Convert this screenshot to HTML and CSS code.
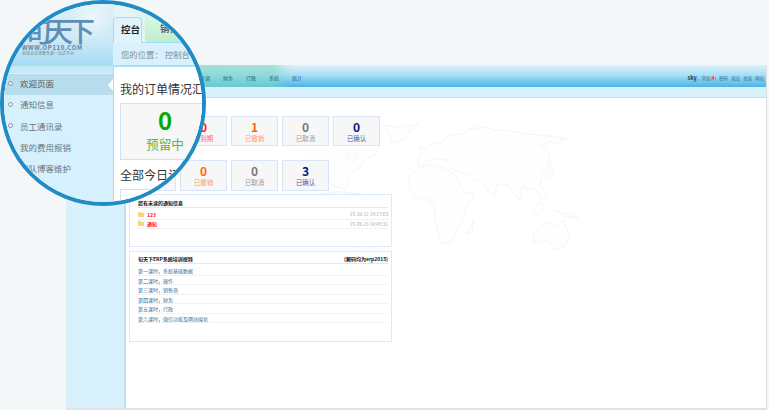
FILE: index.html
```html
<!DOCTYPE html>
<html lang="zh">
<head>
<meta charset="utf-8">
<title>旬天下ERP</title>
<link rel="stylesheet" href="styles.css">
</head>
<body>
<div class="window">
  <header class="topbar">
    <nav class="topnav">
      <span>计调</span><span>财务</span><span>行政</span><span>系统</span><span>统计</span>
    </nav>
    <div class="userbar"><b>sky</b><span>，消息(<em>4</em>)</span><span>密码</span><span>退出</span><span>桌面</span><span>网站</span></div>
  </header>
  <div class="subbar"></div>
  <div class="body">
    <aside class="side"></aside>
    <main class="main">
      <svg class="map" viewBox="0 0 641 311" aria-hidden="true">
        <g transform="translate(214 12) scale(.3333)">
          <path d="M205 210L212 195 235 175 232 150 245 125 238 112 262 118 280 95 300 100 330 75 372 72 380 60 430 50 470 62 500 60 560 72 600 75 680 85 650 100 628 96 600 108 625 128 630 160 612 188 600 220 622 258 606 268 590 240 560 235 548 228 538 270 520 250 505 225 470 225 465 258 440 240 420 210 405 215 385 192 365 190 340 180 320 150 290 146 270 150 245 172 270 165 300 172 325 180 345 195 360 225 378 248 405 250 385 285 375 300 365 340 348 365 330 400 305 400 295 365 285 330 282 285 262 268 230 265 210 240Z"/>
          <path d="M580 370L605 350 630 335 645 352 670 330 690 380 672 410 650 418 620 390 580 400Z"/>
          <path d="M130 45L175 52 235 42 205 68 195 88 160 100 145 70Z"/>
          <path d="M380 370L400 335 395 365 385 372Z"/>
          <path d="M578 300L600 275 615 298 592 315Z"/>
          <path d="M640 300L690 315 715 325 680 322Z"/>
          <path d="M620 200L632 168 642 182 630 205Z"/>
          <path d="M-100 20L-60 45 -30 20 40 35 70 65 118 62 112 128 75 150 55 178 30 195 18 240 -20 228 -55 200 -90 150 -130 110Z"/>
          <path d="M-60 252L-5 245 60 252 105 285 152 302 130 350 110 402 85 470 70 490 45 440 35 380 -15 330Z"/>
          <path d="M20 130L50 130 45 155 25 150Z"/>
        </g>
      </svg>
      <div class="cards">
        <div class="card green"><b>0</b><span>预留中</span></div>
        <div class="card red"><b>0</b><span>未到期</span></div>
        <div class="card orange"><b>1</b><span>已撤销</span></div>
        <div class="card grey"><b>0</b><span>已取消</span></div>
        <div class="card navy"><b>0</b><span>已确认</span></div>
      </div>
      <div class="cards second">
        <div class="card green"><b>0</b><span>预留中</span></div>
        <div class="card orange"><b>0</b><span>已撤销</span></div>
        <div class="card grey"><b>0</b><span>已取消</span></div>
        <div class="card navy"><b>3</b><span>已确认</span></div>
      </div>
      <section class="panel notices">
        <h3 class="panel-title"><span>您有未读的通知信息</span></h3>
        <div class="notice">
          <svg class="folder" viewBox="0 0 6 5"><path d="M0 0h2.4l.6.8H6V5H0z"/></svg>
          <b>123</b><time>15-10-12 14:17:03</time>
        </div>
        <div class="notice">
          <svg class="folder" viewBox="0 0 6 5"><path d="M0 0h2.4l.6.8H6V5H0z"/></svg>
          <b>通知</b><time>15-09-23 14:45:31</time>
        </div>
      </section>
      <section class="panel videos">
        <h3 class="panel-title"><span>旬天下ERP系统培训视频</span><span>(解码均为erp2015)</span></h3>
        <a class="lesson">第一课时，系统基础数据</a>
        <a class="lesson">第二课时，操作</a>
        <a class="lesson">第三课时，销售商</a>
        <a class="lesson">第四课时，财务</a>
        <a class="lesson">第五课时，行政</a>
        <a class="lesson">第六课时，微信功能及网站编化</a>
      </section>
    </main>
  </div>
</div>

<div class="lens">
  <div class="lens-side">
    <div class="logo">
      <div class="logo-mark">旬天下</div>
      <div class="logo-url">WWW.OP110.COM</div>
      <div class="logo-sub">旅游业资源整合第一站式平台</div>
    </div>
    <ul class="menu">
      <li class="active"><i></i>欢迎页面</li>
      <li><i></i>通知信息</li>
      <li><i></i>员工通讯录</li>
      <li class="plain">我的费用报销</li>
      <li class="plain">团队博客维护</li>
    </ul>
  </div>
  <div class="lens-main">
    <div class="tabs">
      <div class="tab current">控台</div>
      <div class="tab other">销售</div>
    </div>
    <div class="crumb">您的位置： 控制台</div>
    <div class="lens-content">
      <h2>我的订单情况汇总</h2>
      <div class="bigcard"><b>0</b><span>预留中</span></div>
      <h2 class="h2b">全部今日订单</h2>
      <div class="bigcard tail"></div>
    </div>
  </div>
</div>
</body>
</html>
```

FILE: styles.css
```css
* { box-sizing: border-box; }
html, body { margin: 0; padding: 0; }
body {
  width: 769px;
  height: 410px;
  overflow: hidden;
  background: #f3f7f8;
  font-family: "Noto Sans CJK SC", "Liberation Sans", sans-serif;
  color: #333;
  padding: 65px 2px 0 66px;
}
h2, h3, ul { margin: 0; padding: 0; }

.window {
  height: 345px;
  display: flex;
  flex-direction: column;
  border-left: 1px solid #dfeef5;
  border-right: 1px solid #dcdfe1;
  border-bottom: 2px solid #dfe3e6;
}
.topbar {
  height: 22px;
  flex: none;
  display: flex;
  justify-content: space-between;
  align-items: flex-end;
  padding: 0 2px 5px 133px;
  font-size: 5px;
  line-height: 8px;
  background:
    linear-gradient(90deg, rgba(125,214,196,.75) 0, rgba(125,214,196,.55) 205px, rgba(125,214,196,0) 225px),
    linear-gradient(#dbf2fb 0, #a9dff5 45%, #60bfea 86%, #4fb4e3 100%);
}
.topnav { display: flex; gap: 13px; color: #1a5f80; }
.userbar { display: flex; gap: 3px; font-size: 4.5px; color: #2a6f95; }
.userbar b { color: #123f66; font-size: 5.5px; margin-right: -3px; }
.userbar em { color: #f22; font-style: normal; font-weight: 700; }

.subbar {
  height: 11px;
  flex: none;
  background: #d8f1fd;
  border-bottom: 1px solid #b7e2f4;
}
.body { flex: 1; display: flex; min-height: 0; }
.side {
  width: 59px;
  flex: none;
  background: #d8f1fd;
  border-right: 2px solid #bfe3f2;
}
.main {
  flex: 1;
  position: relative;
  background: #fff;
  padding: 18px 0 0 3px;
}
.map {
  position: absolute;
  left: 0;
  top: 0;
  width: 641px;
  height: 311px;
}
.map path { fill: #fefefe; stroke: #f1f2f3; stroke-width: 2.5; stroke-linejoin: round; }

.cards { position: relative; display: flex; gap: 4px; }
.cards.second { margin-top: 14px; }
.card {
  width: 47px;
  height: 30px;
  display: flex;
  flex-direction: column;
  align-items: center;
  padding-top: 3px;
  background: #f7f7f8;
  border: 1px solid #d8e5f8;
}
.second .card { height: 31px; }
.card b { font-size: 12px; line-height: 14px; }
.card span { font-size: 6.4px; line-height: 9px; }
.card.green b { color: #0a0; }
.card.green span { color: #5b5; }
.card.red b { color: #f22; }
.card.red span { color: #f66; }
.card.orange b { color: #f60; }
.card.orange span { color: #f96; }
.card.grey b { color: #777; }
.card.grey span { color: #999; }
.card.navy b { color: #00187f; }
.card.navy span { color: #4a5fa8; }

.panel {
  position: relative;
  width: 263px;
  margin-top: 3px;
  padding: 4px 3px 0 8px;
  border: 1px solid #dbe9fb;
  background: rgba(255,255,255,.7);
}
.notices { height: 53px; }
.videos { height: 91px; margin-top: 4px; padding-top: 3px; }
.panel-title {
  display: flex;
  justify-content: space-between;
  margin-bottom: 2px;
  height: 9px;
  font-size: 5px;
  line-height: 8px;
  font-weight: 700;
  color: #111;
  border-bottom: 1px solid #e4e8ea;
}
.notice {
  display: flex;
  align-items: center;
  height: 9.5px;
  font-size: 5px;
  border-bottom: 1px dotted #e2e5e8;
}
.notice b { color: #f11; margin-left: 3px; }
.notice time { margin-left: auto; font-size: 4.7px; color: #aaa; }
.folder { width: 6px; height: 5px; fill: #f8d77b; }
.lesson {
  display: block;
  height: 9.5px;
  font-size: 5px;
  line-height: 9px;
  color: #2c6f9f;
  border-bottom: 1px dotted #e2e5e8;
}

.lens {
  position: absolute;
  left: 0;
  top: 0;
  width: 206px;
  height: 206px;
  display: flex;
  overflow: hidden;
  border: 4px solid #1f8cc6;
  border-radius: 50%;
  background: #f3f7f8;
}
.lens-side { width: 109px; flex: none; background: #d6f1fd; }
.logo {
  height: 62px;
  padding: 12px 0 0 19px;
  background:
    radial-gradient(circle at 88px 14px, rgba(255,255,255,.55) 0, rgba(255,255,255,0) 22px),
    linear-gradient(#dcf0f7 0, #cfeaf6 55%, #a5dbf3 100%);
}
.logo-mark {
  font-size: 28px;
  line-height: 29px;
  font-weight: 500;
  letter-spacing: -6px;
  color: #5e8db6;
}
.logo-url { font-size: 6px; line-height: 6px; font-weight: 700; letter-spacing: .6px; color: #66809c; margin-left: -1px; }
.logo-sub { font-size: 4px; line-height: 5px; color: #71879c; margin-left: -1px; }
.menu { list-style: none; padding-top: 8px; background: linear-gradient(#c6e9f7 7px, #d6f1fd 7px); }
.menu li {
  position: relative;
  display: flex;
  align-items: center;
  gap: 7px;
  height: 21.3px;
  padding: 0 0 3px 4px;
  font-size: 8.5px;
  color: #6a7378;
}
.menu li.plain { padding-left: 16px; }
.menu li.active { background: #b8dded; color: #555; }
.menu li.active::after {
  content: "";
  position: absolute;
  right: 0;
  top: 5px;
  border: 6px solid transparent;
  border-left-width: 0;
  border-right: 5px solid #fff;
}
.menu i {
  width: 5px;
  height: 5px;
  border: 1.5px solid #8a9296;
  border-radius: 50%;
  background: #eef8fc;
}
.lens-main { flex: 1; display: flex; flex-direction: column; min-width: 0; }
.tabs {
  height: 39px;
  flex: none;
  display: flex;
  gap: 3px;
  padding-top: 13px;
  align-items: stretch;
  background:
    radial-gradient(ellipse 45px 30px at 55px 12px, #cdf2d8 0, rgba(205,242,216,0) 100%),
    linear-gradient(90deg, #e3f2f8, #f3f7f8 50px);
  border-bottom: 1px solid #9fdcf5;
}
.tab { font-size: 9.5px; line-height: 23px; font-weight: 700; }
.tab.current {
  width: 35px;
  padding-left: 7px;
  color: #222;
  background: #dff4fd;
  border: 1px solid #a5dcf3;
  border-bottom: 0;
  border-radius: 4px 4px 0 0;
  margin-bottom: -1px;
}
.tab.other {
  width: 70px;
  padding-left: 15px;
  color: #567;
  background: linear-gradient(#d8f6e2, #bfeecd);
}
.crumb {
  height: 24px;
  flex: none;
  padding-left: 8px;
  font-size: 8.4px;
  line-height: 22px;
  color: #7f8f97;
  background: #d8f1fd;
  border-bottom: 2px solid #a9def4;
}
.lens-content {
  flex: 1;
  padding: 15px 0 0 6px;
  background: #fff;
  border-left: 1px solid #a8dcf5;
}
.lens-content h2 {
  font-size: 12px;
  line-height: 14px;
  font-weight: 400;
  white-space: nowrap;
  color: #333;
}
.lens-content .h2b { margin-top: 8px; }
.bigcard {
  width: 90px;
  height: 57px;
  margin-top: 7px;
  display: flex;
  flex-direction: column;
  align-items: center;
  padding-top: 1px;
  background: #f7f7f7;
  border: 1px solid #cfe0f8;
}
.bigcard b { font-size: 24px; line-height: 30px; color: #0a0; }
.bigcard span { font-size: 12.7px; line-height: 17px; color: #54b948; }
.bigcard.tail { height: 40px; background: #fff; }
```
